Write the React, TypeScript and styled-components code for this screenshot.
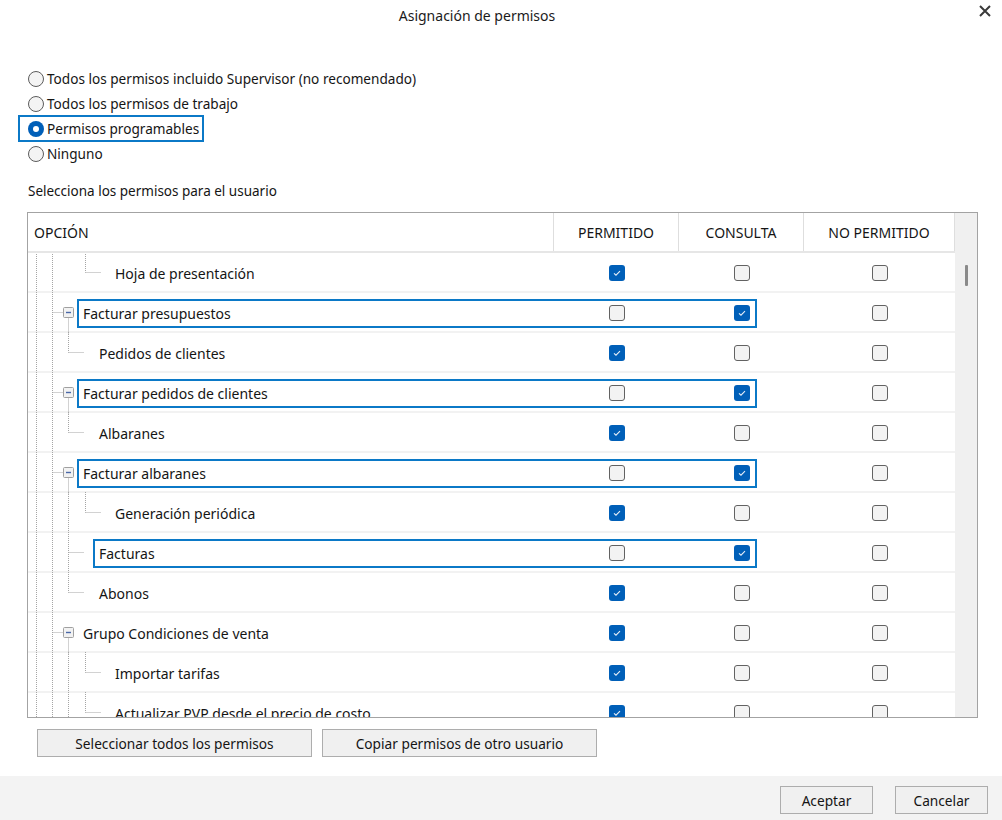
import React from "react";
import styled, { createGlobalStyle } from "styled-components";

const GlobalStyle = createGlobalStyle`
  html, body { margin: 0; padding: 0; background: #ffffff; }
  body {
    font-family: "Noto Sans", "Segoe UI", sans-serif;
    color: #151515;
    font-size: 13.6px;
  }
  * { box-sizing: border-box; }
`;

const Dialog = styled.div`
  width: 1002px;
  height: 820px;
  display: flex;
  flex-direction: column;
  background: #fff;
  overflow: hidden;
`;

const TitleBar = styled.header`
  height: 32px;
  display: flex;
  align-items: flex-start;
`;

const Title = styled.h1`
  flex: 1;
  margin: 0;
  height: 32px;
  line-height: 32px;
  text-align: center;
  font-size: 14px;
  font-weight: 400;
  color: #1b1b1b;
`;

const CloseButton = styled.button`
  width: 48px;
  height: 24px;
  border: none;
  background: transparent;
  display: flex;
  justify-content: flex-end;
  align-items: center;
  padding: 0 11px 2px 0;
  margin: 0;
`;

const Content = styled.main`
  display: flex;
  flex-direction: column;
  padding: 0 0 0 27px;
`;

const RadioList = styled.div`
  margin-top: 34px;
  display: flex;
  flex-direction: column;
`;

const RadioRow = styled.label`
  position: relative;
  height: 25px;
  display: flex;
  align-items: center;
  gap: 3px;
  padding-left: 1px;
  font-size: 13.6px;
`;

const RadioCircle = styled.span<{ $on?: boolean }>`
  width: 16px;
  height: 16px;
  border-radius: 50%;
  flex: none;
  border: ${(p) => (p.$on ? "none" : "1px solid #5c5c5c")};
  background: ${(p) => (p.$on ? "#005fb8" : "#f4f4f4")};
  display: flex;
  align-items: center;
  justify-content: center;
  &::after {
    content: "";
    display: ${(p) => (p.$on ? "block" : "none")};
    width: 6px;
    height: 6px;
    border-radius: 50%;
    background: #fff;
  }
`;

const Focus = styled.span<{ $left: number; $width: number; $top?: number; $height?: number }>`
  position: absolute;
  left: ${(p) => p.$left}px;
  width: ${(p) => p.$width}px;
  top: ${(p) => p.$top ?? 0}px;
  height: ${(p) => p.$height ?? 28}px;
  border: 2px solid #0b79c7;
  pointer-events: none;
`;

const SectionLabel = styled.div`
  margin-top: 16px;
  height: 18px;
  line-height: 18px;
  padding-left: 1px;
  font-size: 13.5px;
`;

const Table = styled.div`
  margin-top: 12px;
  width: 951px;
  height: 506px;
  border: 1px solid #a3a3a3;
  display: flex;
  overflow: hidden;
`;

const TableMain = styled.div`
  width: 927px;
  display: flex;
  flex-direction: column;
`;

const COLS = "526px 125px 125px 151px";

const HeaderRow = styled.div`
  display: grid;
  grid-template-columns: ${COLS};
  height: 40px;
  border-bottom: 2px solid #e6e6e6;
  flex: none;
`;

const HeaderCell = styled.div<{ $align?: string }>`
  display: flex;
  align-items: center;
  justify-content: ${(p) => p.$align ?? "center"};
  padding-left: ${(p) => (p.$align === "flex-start" ? "6px" : "0")};
  border-right: 1px solid #dedede;
  font-size: 14px;
  text-transform: uppercase;
`;

const Body = styled.div`
  flex: 1;
  overflow: hidden;
`;

const Row = styled.div`
  position: relative;
  display: grid;
  grid-template-columns: ${COLS};
  height: 40px;
  padding-top: 1px;
  border-bottom: 2px solid #f2f2f2;
`;

const NameCell = styled.div`
  display: flex;
  align-items: center;
  height: 37px;
  padding-top: 1px;
  font-size: 14px;
  white-space: nowrap;
`;

const CheckCell = styled.div`
  display: flex;
  align-items: center;
  justify-content: center;
  height: 37px;
`;

const Box = styled.span<{ $on?: boolean }>`
  width: 16px;
  height: 16px;
  border-radius: 3px;
  display: flex;
  align-items: center;
  justify-content: center;
  border: ${(p) => (p.$on ? "none" : "1px solid #626262")};
  background: ${(p) => (p.$on ? "#005fb8" : "#f3f3f3")};
`;

const ScrollTrack = styled.div`
  width: 22px;
  background: #f0f0f0;
  padding: 52px 0 0 10px;
`;

const ScrollThumb = styled.div`
  width: 3px;
  height: 21px;
  border-radius: 1px;
  background: #8a8a8a;
`;

const ButtonRow = styled.div`
  margin-top: 11px;
  padding-left: 10px;
  display: flex;
  gap: 10px;
`;

const Button = styled.button<{ $w: number }>`
  width: ${(p) => p.$w}px;
  height: 28px;
  border: 1px solid #adadad;
  background: #f0f0f0;
  font-family: "Noto Sans", "Segoe UI", sans-serif;
  font-size: 13.7px;
  color: #151515;
  padding: 0;
`;

const Footer = styled.footer`
  margin-top: auto;
  height: 44px;
  background: #f3f3f3;
  display: flex;
  justify-content: flex-end;
  align-items: flex-start;
  gap: 22px;
  padding: 10px 14px 0 0;
`;

type Tree = {
  full: number[];
  half?: number;
  h?: [number, number];
  box?: boolean;
};

type RowData = {
  label: string;
  indent: number;
  tree: Tree;
  p?: boolean;
  c?: boolean;
  n?: boolean;
  hl?: boolean;
};

const L1 = 8.5;
const L2 = 24.5;
const L3 = 40.5;
const L4 = 57.5;

const node: Tree = { full: [L1, L2], h: [L2, 35], box: true };
const leafLast: Tree = { full: [L1, L2], half: L3, h: [L3, 56] };
const leafMid: Tree = { full: [L1, L2, L3], h: [L3, 56] };
const deepMid: Tree = { full: [L1, L2, L3], half: L4, h: [L4, 73] };

const rows: RowData[] = [
  { label: "Hoja de presentación", indent: 87, tree: { full: [L1, L2], half: L4, h: [L4, 73] }, p: true },
  { label: "Facturar presupuestos", indent: 55, tree: node, c: true, hl: true },
  { label: "Pedidos de clientes", indent: 71, tree: leafLast, p: true },
  { label: "Facturar pedidos de clientes", indent: 55, tree: node, c: true, hl: true },
  { label: "Albaranes", indent: 71, tree: leafLast, p: true },
  { label: "Facturar albaranes", indent: 55, tree: node, c: true, hl: true },
  { label: "Generación periódica", indent: 87, tree: deepMid, p: true },
  { label: "Facturas", indent: 71, tree: leafMid, c: true, hl: true },
  { label: "Abonos", indent: 71, tree: leafLast, p: true },
  { label: "Grupo Condiciones de venta", indent: 55, tree: node, p: true },
  { label: "Importar tarifas", indent: 87, tree: deepMid, p: true },
  { label: "Actualizar PVP desde el precio de costo", indent: 87, tree: deepMid, p: true },
];

const DOT = { stroke: "#a5a5a5", strokeWidth: 1, strokeDasharray: "1 1" };
const RH = 41;
const CY = 19.5;

function TreeGuide({ tree, width }: { tree: Tree; width: number }) {
  return (
    <svg width={width} height={RH} style={{ flex: "none", overflow: "visible", marginTop: 0 }}>
      {tree.full.map((x) => (
        <line key={x} x1={x} y1={-1} x2={x} y2={RH} {...DOT} />
      ))}
      {tree.half !== undefined && <line x1={tree.half} y1={-1} x2={tree.half} y2={CY} {...DOT} />}
      {tree.h && <line x1={tree.h[0]} y1={CY} x2={tree.h[1]} y2={CY} {...DOT} />}
      {tree.box && (
        <>
          <line x1={L3} y1={CY + 5} x2={L3} y2={RH} {...DOT} />
          <rect x={35.5} y={CY - 5} width={10} height={10} rx={1} fill="#f2f2f2" stroke="#a0a0a0" />
          <line x1={38} y1={CY} x2={43} y2={CY} stroke="#4a68a8" strokeWidth={1.4} />
        </>
      )}
    </svg>
  );
}

function Check({ on }: { on?: boolean }) {
  return (
    <Box $on={on}>
      {on && (
        <svg width="16" height="16" viewBox="0 0 16 16">
          <polyline points="5,8.3 7,10.2 11,6.2" fill="none" stroke="#e6eef8" strokeWidth="1.1" />
        </svg>
      )}
    </Box>
  );
}

function CloseIcon() {
  return (
    <svg width="12" height="12" viewBox="0 0 12 12">
      <path d="M1 1 L11 11 M11 1 L1 11" stroke="#3a3a3a" strokeWidth="2" />
    </svg>
  );
}

const radios = [
  "Todos los permisos incluido Supervisor (no recomendado)",
  "Todos los permisos de trabajo",
  "Permisos programables",
  "Ninguno",
];

export default function App() {
  return (
    <>
      <GlobalStyle />
      <Dialog>
        <TitleBar>
          <Title>Asignación de permisos</Title>
          <CloseButton aria-label="Cerrar">
            <CloseIcon />
          </CloseButton>
        </TitleBar>
        <Content>
          <RadioList>
            {radios.map((r, i) => (
              <RadioRow key={r}>
                <RadioCircle $on={i === 2} />
                {r}
                {i === 2 && <Focus $left={-9} $width={186} $top={-1} $height={27} />}
              </RadioRow>
            ))}
          </RadioList>
          <SectionLabel>Selecciona los permisos para el usuario</SectionLabel>
          <Table>
            <TableMain>
              <HeaderRow>
                <HeaderCell $align="flex-start">Opción</HeaderCell>
                <HeaderCell>Permitido</HeaderCell>
                <HeaderCell>Consulta</HeaderCell>
                <HeaderCell>No permitido</HeaderCell>
              </HeaderRow>
              <Body>
                {rows.map((r) => (
                  <Row key={r.label}>
                    <NameCell>
                      <TreeGuide tree={r.tree} width={r.indent} />
                      {r.label}
                    </NameCell>
                    <CheckCell>
                      <Check on={r.p} />
                    </CheckCell>
                    <CheckCell>
                      <Check on={r.c} />
                    </CheckCell>
                    <CheckCell>
                      <Check on={r.n} />
                    </CheckCell>
                    {r.hl && <Focus $left={r.indent - 6} $width={729 - (r.indent - 6)} $top={6} $height={29} />}
                  </Row>
                ))}
              </Body>
            </TableMain>
            <ScrollTrack>
              <ScrollThumb />
            </ScrollTrack>
          </Table>
          <ButtonRow>
            <Button $w={275}>Seleccionar todos los permisos</Button>
            <Button $w={275}>Copiar permisos de otro usuario</Button>
          </ButtonRow>
        </Content>
        <Footer>
          <Button $w={93}>Aceptar</Button>
          <Button $w={93}>Cancelar</Button>
        </Footer>
      </Dialog>
    </>
  );
}
